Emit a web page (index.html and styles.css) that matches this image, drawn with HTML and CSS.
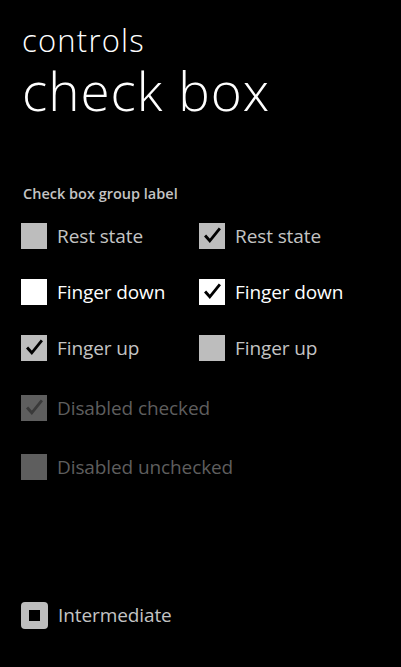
FILE: index.html
```html
<!DOCTYPE html>
<html lang="en">
<head>
  <meta charset="UTF-8" />
  <title>controls - check box</title>
  <meta name="viewport" content="width=device-width, initial-scale=1.0" />
  <link rel="stylesheet" href="styles.css">
</head>
<body>
  <div id="page">
    <div id="header">
      <div class="app-title">controls</div>
      <div class="page-title">check box</div>
    </div>

    <div class="group-label">Check box group label</div>

    <div class="grid">
      <div class="item">
        <span class="box"></span>
        <span class="text">Rest state</span>
      </div>
      <div class="item">
        <span class="box"><svg viewBox="0 0 26 26"><path d="M7 13.5 L10.8 17.8 L20 6.5" /></svg></span>
        <span class="text">Rest state</span>
      </div>
      <div class="item pressed">
        <span class="box"></span>
        <span class="text">Finger down</span>
      </div>
      <div class="item pressed">
        <span class="box"><svg viewBox="0 0 26 26"><path d="M7 13.5 L10.8 17.8 L20 6.5" /></svg></span>
        <span class="text">Finger down</span>
      </div>
      <div class="item">
        <span class="box"><svg viewBox="0 0 26 26"><path d="M7 13.5 L10.8 17.8 L20 6.5" /></svg></span>
        <span class="text">Finger up</span>
      </div>
      <div class="item">
        <span class="box"></span>
        <span class="text">Finger up</span>
      </div>
    </div>

    <div class="disabled-list">
      <div class="item disabled">
        <span class="box"><svg viewBox="0 0 26 26"><path d="M7 13.5 L10.8 17.8 L20 6.5" /></svg></span>
        <span class="text">Disabled checked</span>
      </div>
      <div class="item disabled">
        <span class="box"></span>
        <span class="text">Disabled unchecked</span>
      </div>
    </div>

    <div class="item intermediate">
      <span class="box"><span class="dot"></span></span>
      <span class="text">Intermediate</span>
    </div>
  </div>
</body>
</html>
```
FILE: styles.css
```css
:root {
  --bg: #000;
  --text: #fff;
  --soft: #c4c4c4;
  --box: #bdbdbd;
  --muted: #5e5e5e;
}
body {
  margin: 0;
  background: var(--bg);
  color: var(--text);
  font-family: 'Open Sans', 'Noto Sans', sans-serif;
}
#page {
  width: 401px;
  height: 667px;
  padding: 0 0 0 21px;
  box-sizing: border-box;
  overflow: hidden;
}
#header {
  padding-top: 19px;
}
.app-title {
  font-size: 31px;
  font-weight: 300;
  line-height: 42px;
  letter-spacing: 1.2px;
  padding-left: 1px;
}
.page-title {
  font-size: 53px;
  font-weight: 300;
  line-height: 60px;
  letter-spacing: 1px;
  padding-left: 1px;
}
.group-label {
  margin-top: 63px;
  font-size: 14.5px;
  font-weight: 600;
  color: var(--soft);
  padding-left: 2px;
}
.grid {
  display: grid;
  grid-template-columns: 178px 1fr;
  row-gap: 30px;
  margin-top: 20px;
}
.item {
  display: flex;
  align-items: center;
  gap: 10px;
  height: 26px;
}
.box {
  width: 26px;
  height: 26px;
  background: var(--box);
  display: flex;
  align-items: center;
  justify-content: center;
  flex: none;
}
.box svg {
  width: 26px;
  height: 26px;
}
.box path {
  fill: none;
  stroke: #000;
  stroke-width: 2.8;
  stroke-linecap: square;
}
.text {
  font-size: 19px;
  color: var(--soft);
  letter-spacing: -0.1px;
}
.pressed .box {
  background: #fff;
}
.pressed .text {
  color: #fff;
}
.disabled-list {
  display: flex;
  flex-direction: column;
  gap: 33px;
  margin-top: 34px;
}
.disabled .box {
  background: var(--muted);
}
.disabled .box path {
  stroke: #3a3a3a;
}
.disabled .text {
  color: var(--muted);
}
.intermediate {
  margin-top: 122px;
}
.intermediate .box {
  width: 27px;
  height: 27px;
  border-radius: 4px;
}
.intermediate .dot {
  width: 11px;
  height: 11px;
  background: #000;
}
```
